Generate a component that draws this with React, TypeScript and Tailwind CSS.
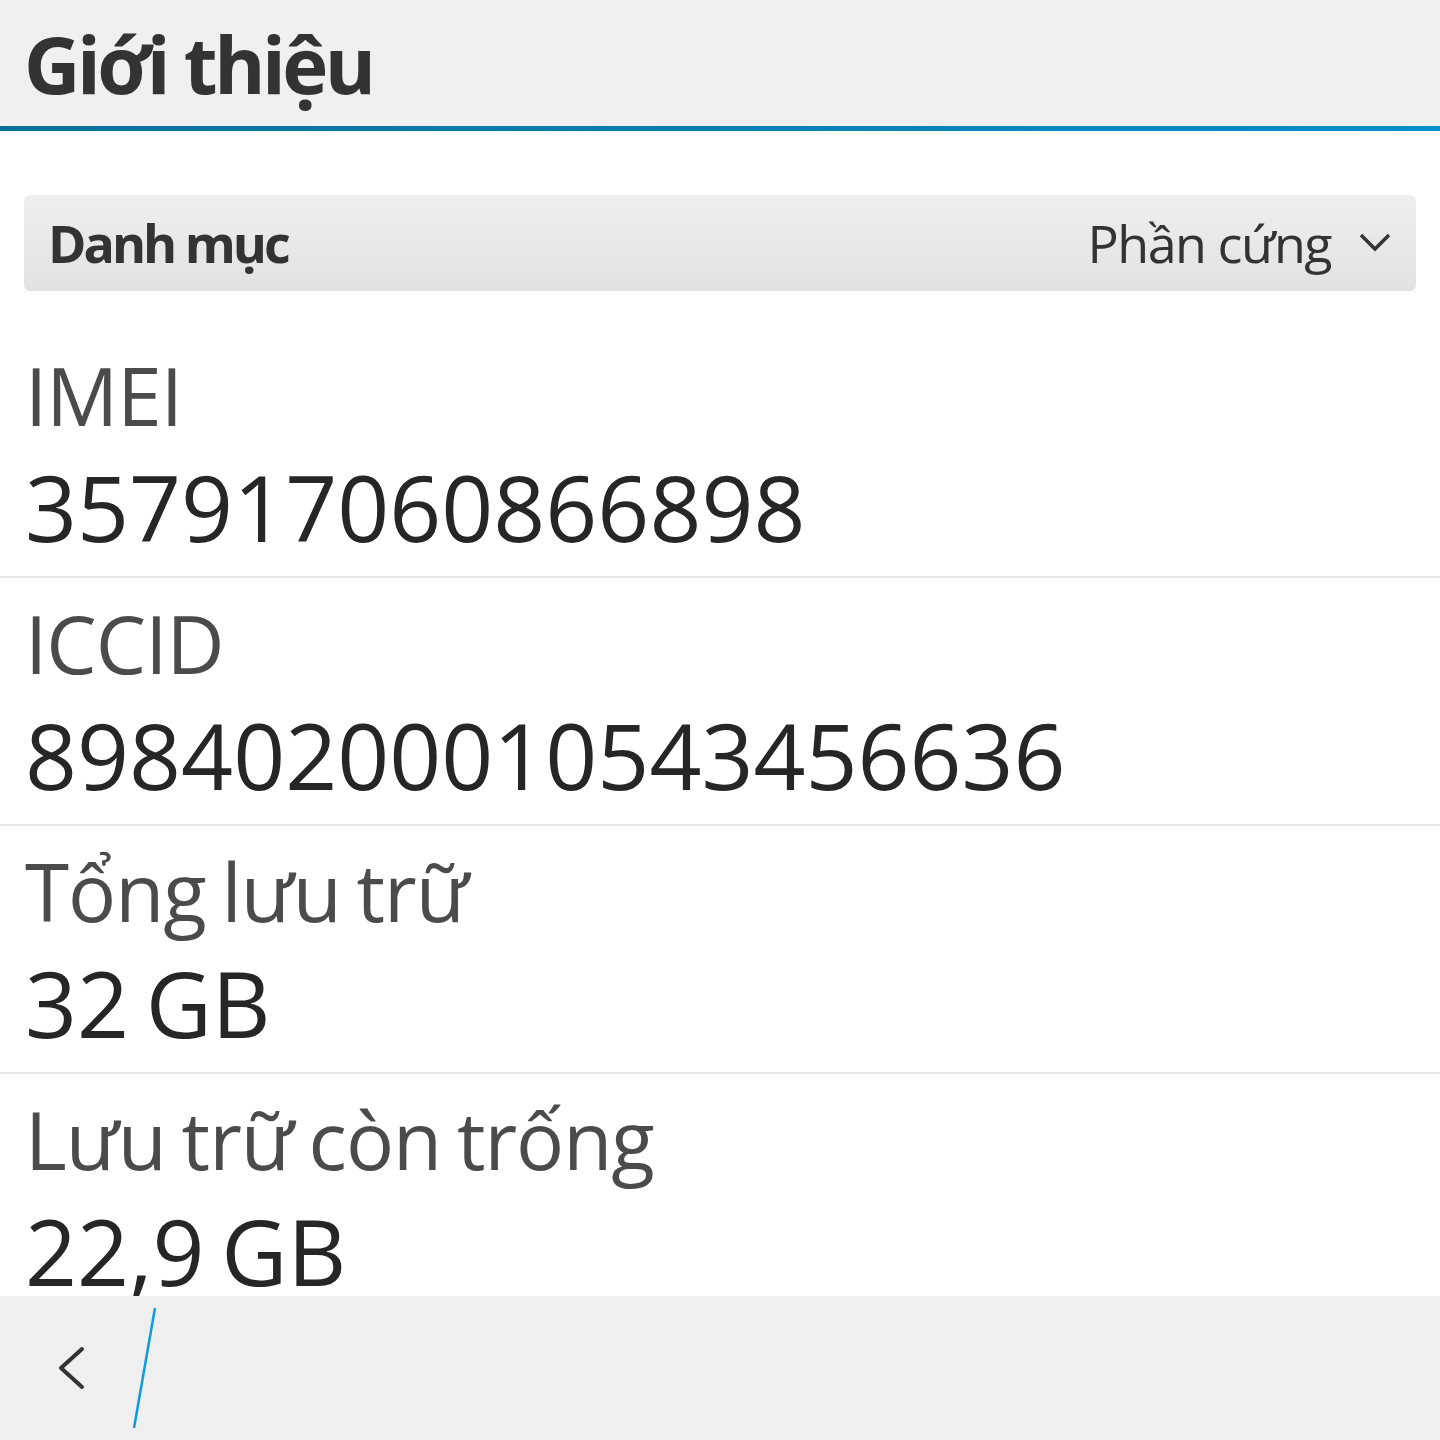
import React from "react";

const font = { fontFamily: '"Open Sans", "Noto Sans", sans-serif' };

const rows = [
  { label: "IMEI", value: "357917060866898" },
  { label: "ICCID", value: "89840200010543456636" },
  { label: "Tổng lưu trữ", value: "32 GB" },
  { label: "Lưu trữ còn trống", value: "22,9 GB" },
];

export default function App() {
  return (
    <div className="flex h-[1440px] w-[1440px] flex-col bg-white font-['Open_Sans',_'Noto_Sans',_sans-serif]" style={font}>
      <div className="flex flex-1 flex-col overflow-hidden">
        <header className="h-[126px] shrink-0 bg-[#f0f0f0] pl-[24px] pt-[25px]">
          <h1 className="text-[78px] font-bold leading-[78px] tracking-[-3.5px] text-[#333333]">Giới thiệu</h1>
        </header>
        <div className="h-[5px] shrink-0 bg-gradient-to-r from-[#0a6f98] to-[#068fcb]" />
        <div className="mx-[24px] mt-[64px] flex h-[96px] shrink-0 items-center justify-between rounded-[6px] bg-gradient-to-b from-[#efefef] to-[#e2e2e2] pl-[24px] pr-[25px]">
          <span className="text-[52px] font-bold leading-[52px] tracking-[-3px] text-[#333333]">Danh mục</span>
          <div className="flex items-center gap-[28px]">
            <span className="text-[52px] leading-[52px] tracking-[-1.5px] text-[#333333]">Phần cứng</span>
            <svg width="32" height="20" viewBox="0 0 32 20" fill="none">
              <polyline points="2,2 16,16 30,2" stroke="#333333" strokeWidth="3.5" strokeLinejoin="miter" />
            </svg>
          </div>
        </div>
        <div className="pt-[39px]">
          {rows.map((r) => (
            <div key={r.label} className="border-b-2 border-[#e5e5e5] pb-[23px] pl-[25px] pt-[25px]">
              <div className="h-[80px] whitespace-nowrap text-[80px] leading-[80px] tracking-[-1px] text-[#4b4b4b] [word-spacing:-4px]">{r.label}</div>
              <div className="mt-[27px] h-[91px] whitespace-nowrap text-[91px] leading-[91px] tracking-[0px] text-[#262626] [word-spacing:-7px]">{r.value}</div>
            </div>
          ))}
        </div>
      </div>
      <div className="h-[144px] shrink-0 bg-[#efefef]">
        <svg width="200" height="144" viewBox="0 0 200 144" fill="none">
          <polyline points="82,53 61,72 82,91" stroke="#333333" strokeWidth="4" strokeLinecap="round" strokeLinejoin="round" />
          <line x1="155" y1="12" x2="134" y2="132" stroke="#0e9bd8" strokeWidth="2.5" />
        </svg>
      </div>
    </div>
  );
}
